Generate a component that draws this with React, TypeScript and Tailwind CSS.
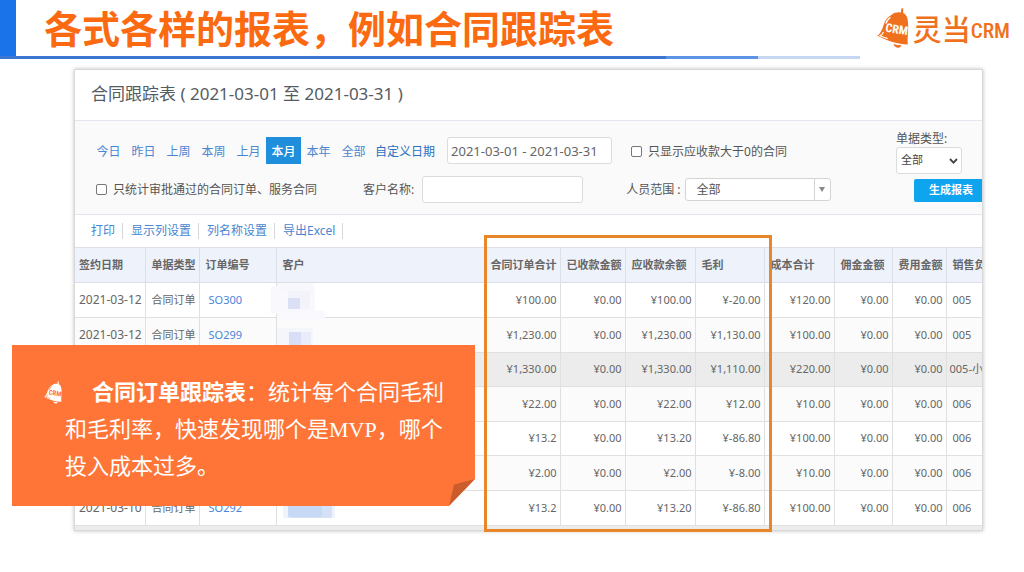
import { clsx } from 'clsx'

interface Row {
  date?: string
  type?: string
  order?: string
  amounts: string[]
  seller: string
  mask?: 'tall' | 'short' | 'wide'
  hovered?: boolean
}

const ranges = ['今日', '昨日', '上周', '本周', '上月', '本月', '本年', '全部']

const tools = ['打印', '显示列设置', '列名称设置', '导出Excel']

const columns = [
  { label: '签约日期', width: 'w-[70px]', pad: 'pl-1' },
  { label: '单据类型', width: 'w-[54px]', pad: 'pl-1.5' },
  { label: '订单编号', width: 'w-[77px]', pad: 'pl-1.5' },
  { label: '客户', width: '', pad: 'pl-1.5' },
  { label: '合同订单合计', width: 'w-[76px]', pad: 'pl-1.5' },
  { label: '已收款金额', width: 'w-[65px]', pad: 'pl-1.5' },
  { label: '应收款余额', width: 'w-[70px]', pad: 'pl-1.5' },
  { label: '毛利', width: 'w-[69px]', pad: 'pl-1.5' },
  { label: '成本合计', width: 'w-[70px]', pad: 'pl-1.5' },
  { label: '佣金金额', width: 'w-[58px]', pad: 'pl-1.5' },
  { label: '费用金额', width: 'w-[54px]', pad: 'pl-1.5' },
  { label: '销售负', width: 'w-[36px]', pad: 'pl-1.5' },
]

const rows: Row[] = [
  {
    date: '2021-03-12',
    type: '合同订单',
    order: 'SO300',
    amounts: ['¥100.00', '¥0.00', '¥100.00', '¥-20.00', '¥120.00', '¥0.00', '¥0.00'],
    seller: '005',
    mask: 'tall',
  },
  {
    date: '2021-03-12',
    type: '合同订单',
    order: 'SO299',
    amounts: ['¥1,230.00', '¥0.00', '¥1,230.00', '¥1,130.00', '¥100.00', '¥0.00', '¥0.00'],
    seller: '005',
    mask: 'short',
  },
  {
    amounts: ['¥1,330.00', '¥0.00', '¥1,330.00', '¥1,110.00', '¥220.00', '¥0.00', '¥0.00'],
    seller: '005-小',
    hovered: true,
  },
  {
    amounts: ['¥22.00', '¥0.00', '¥22.00', '¥12.00', '¥10.00', '¥0.00', '¥0.00'],
    seller: '006',
  },
  {
    amounts: ['¥13.2', '¥0.00', '¥13.20', '¥-86.80', '¥100.00', '¥0.00', '¥0.00'],
    seller: '006',
  },
  {
    amounts: ['¥2.00', '¥0.00', '¥2.00', '¥-8.00', '¥10.00', '¥0.00', '¥0.00'],
    seller: '006',
  },
  {
    date: '2021-03-10',
    type: '合同订单',
    order: 'SO292',
    amounts: ['¥13.2', '¥0.00', '¥13.20', '¥-86.80', '¥100.00', '¥0.00', '¥0.00'],
    seller: '006',
    mask: 'wide',
  },
]

const Bell = ({ className, ink, paper }: { className: string; ink: string; paper: string }) => (
  <svg viewBox="0 0 32 40" className={className} aria-hidden="true">
    <path d="M24.4 0.5 L26.2 0.2 L26.2 5 L23.8 5.2 Z" fill={ink} />
    <path
      d="M15 6.6 C18 3.6 25.4 3.4 28.4 6.6 C31.4 9.8 31.4 17 31 24 C30.8 28 30.4 32 30.8 36.4 C21 36.2 10 33 0.5 27.8 C4 25 5.2 21.4 6.8 16.6 C8.4 11.6 11 9 15 6.6 Z"
      fill={ink}
    />
    <path d="M13.4 9.2 C11 11 9.6 13 8.8 15.6" fill="none" stroke={paper} strokeWidth="1.4" />
    <path d="M6.6 24 C5.6 26 4.6 27 3 27.8 C5 28.8 8 29.8 10.6 30.6" fill="none" stroke={paper} strokeWidth="1.2" />
    <path d="M16.6 36 C19 36.8 21.6 37.2 24.4 37.2 C23.6 39.6 21.6 40 19.8 39.4 C18 38.8 16.8 37.8 16.6 36 Z" fill={ink} />
    <text
      x="8"
      y="23.6"
      fontSize="12"
      fontWeight="700"
      fontFamily="'Roboto Condensed', 'Liberation Sans Narrow', sans-serif"
      fill={paper}
      transform="rotate(9 8 23.6)"
    >
      CRM
    </text>
  </svg>
)

const Mosaic = ({ kind }: { kind: 'tall' | 'short' | 'wide' }) => (
  <svg viewBox="0 0 60 34" className="-ml-1 block h-[34px] w-[60px] overflow-visible" aria-hidden="true">
    {kind === 'tall' && (
      <>
        <rect x="-2" y="3" width="44" height="28" fill="#f9f9fd" />
        <rect x="4" y="0" width="36" height="10" fill="#f8f8fc" />
        <rect x="15" y="8" width="22" height="18" fill="#f3f4fb" />
        <rect x="15" y="15" width="12" height="11" fill="#dbe0f5" />
        <rect x="4" y="28" width="48" height="8" fill="#f9f9fd" />
      </>
    )}
    {kind === 'short' && (
      <>
        <rect x="4" y="10" width="36" height="20" fill="#f5f6fb" />
        <rect x="16" y="14" width="12" height="16" fill="#d8def5" />
        <rect x="28" y="14" width="10" height="16" fill="#e9ecf9" />
      </>
    )}
    {kind === 'wide' && (
      <>
        <rect x="10" y="12" width="52" height="15" rx="2" fill="#eef3fc" />
        <rect x="15" y="12" width="44" height="15" rx="2" fill="#d5e1f7" />
        <rect x="15" y="14" width="34" height="12" rx="2" fill="#c8d9f5" />
      </>
    )}
  </svg>
)

const Header = () => (
  <header>
    <div className="flex h-14 items-center">
      <div className="h-full w-4 bg-[#1a73e8]" />
      <h1 className="ml-7 flex-1 text-[38px] leading-[54px] font-bold whitespace-nowrap text-[#fb6a10]">
        各式各样的报表，例如合同跟踪表
      </h1>
      <div className="mr-[14px] flex items-center text-[#f0711d]">
        <Bell className="mr-1 h-10 w-8" ink="#f0711d" paper="#ffffff" />
        <span className="pt-1 text-[29px] leading-10 font-medium">灵当</span>
        <span className="pt-1.5 font-['Roboto_Condensed','Liberation_Sans_Narrow',sans-serif] text-[21px] leading-10 font-medium">
          CRM
        </span>
      </div>
    </div>
    <div className="flex h-[3px]">
      <div className="w-[65%] bg-[#3a76d2]" />
      <div className="w-[9%] bg-[#5c93e4]" />
      <div className="w-[10%] bg-[#c6d7f3]" />
    </div>
  </header>
)

const Filters = () => (
  <form className="flex justify-between overflow-hidden border-y border-[#e3e6ee] bg-[#fafafa] pb-[11px] text-xs text-[#555]">
    <div className="flex flex-col gap-3 pt-4 pl-4">
      <div className="flex h-[27px] items-center">
        <div className="flex items-center">
          {ranges.map((range) => (
            <button
              key={range}
              type="button"
              className={clsx(
                'h-[27px] w-[35px] pt-0.5 text-center',
                range === '本月' ? 'bg-[#1f8fdb] font-medium text-white' : 'text-[#4a86d0]'
              )}
            >
              {range}
            </button>
          ))}
        </div>
        <label htmlFor="period" className="ml-1 pt-0.5 text-[#2a6fc0]">
          自定义日期
        </label>
        <input
          id="period"
          type="text"
          defaultValue="2021-03-01 - 2021-03-31"
          className="ml-3 h-[27px] w-[165px] rounded-[3px] border border-[#dcdcdc] bg-white px-[3px] text-[13px] text-[#666]"
        />
        <label className="ml-[19px] flex items-center gap-1.5 pt-0.5">
          <input type="checkbox" className="size-[11px] appearance-none rounded-[2px] border border-[#777] bg-white" />
          只显示应收款大于0的合同
        </label>
      </div>
      <div className="flex h-[27px] items-center">
        <label className="ml-[5px] flex items-center gap-1.5">
          <input type="checkbox" className="size-[11px] appearance-none rounded-[2px] border border-[#777] bg-white" />
          只统计审批通过的合同订单、服务合同
        </label>
        <label htmlFor="customer" className="ml-[46px]">
          客户名称:
        </label>
        <input
          id="customer"
          type="text"
          className="ml-2 h-[27px] w-[161px] rounded-[3px] border border-[#dcdcdc] bg-white px-1"
        />
        <label htmlFor="staff" className="ml-[43px]">
          人员范围 :
        </label>
        <div className="relative ml-1">
          <select
            id="staff"
            className="block h-[23px] w-[146px] appearance-none rounded-[3px] border border-[#d4d4d4] bg-white pl-[11px] text-xs"
          >
            <option>全部</option>
          </select>
          <span className="pointer-events-none absolute inset-y-px right-px flex w-4 items-center justify-center border-l border-[#d4d4d4]">
            <svg viewBox="0 0 6 5" className="h-[5px] w-[6px]" aria-hidden="true">
              <path d="M0 0 H6 L3 5 Z" fill="#888" />
            </svg>
          </span>
        </div>
      </div>
    </div>
    <div className="flex w-[86px] flex-col items-start pt-2.5">
      <label htmlFor="doc-type" className="leading-4">
        单据类型:
      </label>
      <div className="relative">
        <select
          id="doc-type"
          className="block h-[27px] w-[66px] appearance-none rounded-[3px] border border-[#dcdcdc] bg-white pl-1 text-[11px] text-[#444]"
        >
          <option>全部</option>
        </select>
        <svg
          viewBox="0 0 9 6"
          className="pointer-events-none absolute top-[11px] right-1 h-1.5 w-[9px]"
          aria-hidden="true"
        >
          <path d="M1 1 L4.5 4.6 L8 1" fill="none" stroke="#444" strokeWidth="1.8" />
        </svg>
      </div>
      <button
        type="submit"
        className="mt-[5px] h-[23px] self-end rounded-l-[2px] bg-[#0fa4ee] pr-[9px] pl-[15px] text-[11px] font-bold text-white"
      >
        生成报表
      </button>
    </div>
  </form>
)

const ReportTable = () => (
  <table className="w-full table-fixed border-collapse text-[11px] text-[#666]">
    <thead>
      <tr className="h-[35px] bg-[#eef2fb]">
        {columns.map(({ label, width, pad }) => (
          <th
            key={label}
            className={clsx(
              'overflow-hidden border-y border-r border-[#dcdfe6] text-left font-bold whitespace-nowrap last:border-r-0',
              width,
              pad
            )}
          >
            {label}
          </th>
        ))}
      </tr>
    </thead>
    <tbody>
      {rows.map((row, index) => (
        <tr
          key={index}
          className={clsx(
            'odd:h-[34px] even:h-[35px] [&>td]:border-r [&>td]:border-b [&>td]:border-[#e0e0e0] [&>td]:p-0 [&>td]:whitespace-nowrap [&>td:last-child]:border-r-0',
            row.hovered ? 'bg-[#ececec]' : 'odd:bg-white even:bg-[#fbfbfb]'
          )}
        >
          <td className="text-xs">
            <span className="pl-1">{row.date}</span>
          </td>
          <td>
            <span className="pl-1.5">{row.type}</span>
          </td>
          <td>
            {row.order && (
              <a href="#" className="pl-[9px] text-[#4a86d8]">
                {row.order}
              </a>
            )}
          </td>
          <td>{row.mask && <Mosaic kind={row.mask} />}</td>
          {row.amounts.map((amount, i) => (
            <td key={i} className="text-right">
              <span className="pr-[3px]">{amount}</span>
            </td>
          ))}
          <td className="overflow-hidden">
            <span className={row.hovered ? 'pl-[3px]' : 'pl-1.5'}>{row.seller}</span>
          </td>
        </tr>
      ))}
    </tbody>
  </table>
)

const Callout = () => (
  <aside className="absolute top-[276px] -left-[62px] w-[463px] bg-[#ff7537] pt-[29px] pr-[25px] pb-[21px] pl-[53px] text-[22px] leading-[37px] text-white [clip-path:polygon(0_0,100%_0,100%_calc(100%-27px),calc(100%-26px)_100%,0_100%)]">
    <Bell className="absolute top-9 left-8 h-[23px] w-[18px]" ink="#ffffff" paper="#ff7537" />
    <p className="indent-[27px] font-['Liberation_Serif','Noto_Sans_CJK_SC',serif]">
      <strong className="font-bold">合同订单跟踪表</strong>
      ：统计每个合同毛利和毛利率，快速发现哪个是MVP，哪个投入成本过多。
    </p>
    <svg viewBox="0 0 26 27" className="absolute right-0 bottom-0 h-[27px] w-[26px]" aria-hidden="true">
      <path d="M0 27 L5 5.5 L26 0 Z" fill="#cb5d2d" />
    </svg>
  </aside>
)

export default function App() {
  return (
    <div className="min-h-screen overflow-hidden bg-white font-['Noto_Sans','Noto_Sans_CJK_SC',sans-serif]">
      <Header />
      <main className="relative mt-2.5 mr-[41px] ml-[74px]">
        <section className="border border-[#d9d9d9] bg-white shadow-[0_0_4px_rgba(0,0,0,0.25)]">
          <h2 className="px-4 pb-0.5 text-[17px] leading-[48px] text-[#555b63]">
            合同跟踪表 ( 2021-03-01 至 2021-03-31 )
          </h2>
          <Filters />
          <nav className="flex h-8 items-center pl-2 text-xs leading-4 text-[#4a86d0]">
            {tools.map((tool) => (
              <button key={tool} type="button" className="border-r border-[#d8d8d8] pr-[7px] pl-2">
                {tool}
              </button>
            ))}
          </nav>
          <ReportTable />
          <div className="h-1 bg-[#ececec]" />
        </section>
        <div className="pointer-events-none absolute top-[166px] right-[211px] -bottom-px w-[288px] border-[3px] border-[#e8862a]" />
        <Callout />
      </main>
    </div>
  )
}
